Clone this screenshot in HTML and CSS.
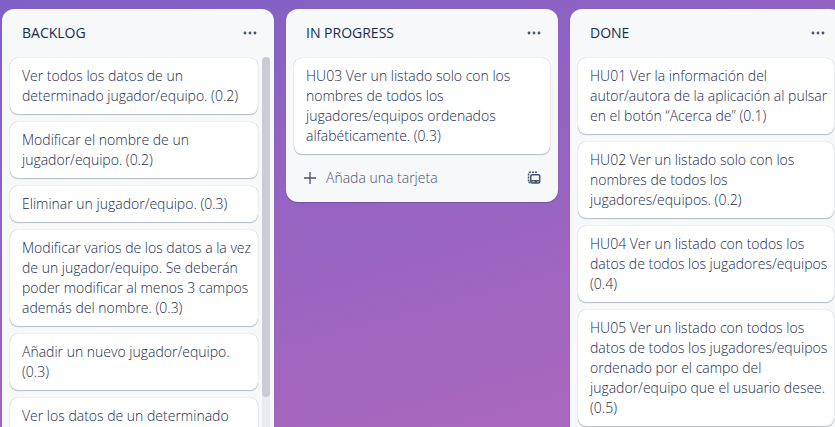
FILE: index.html
```html
<!DOCTYPE html>
<html lang="es">
<head>
<meta charset="utf-8">
<title>Tablero</title>
<link rel="stylesheet" href="styles.css">
</head>
<body>
<svg class="sprite" aria-hidden="true">
  <symbol id="dots" viewBox="0 0 16 16"><circle cx="3" cy="8" r="1.4"/><circle cx="8" cy="8" r="1.4"/><circle cx="13" cy="8" r="1.4"/></symbol>
</svg>
<main class="board">
  <section class="list list-tall">
    <header class="list-header">
      <h2>BACKLOG</h2>
      <button class="icon-button" type="button" aria-label="Acciones de lista"><svg><use href="#dots"/></svg></button>
    </header>
    <div class="list-body">
      <ul class="cards">
        <li><a class="card" href="#">Ver todos los datos de un determinado jugador/equipo. (0.2)</a></li>
        <li><a class="card" href="#">Modificar el nombre de un jugador/equipo. (0.2)</a></li>
        <li><a class="card" href="#">Eliminar un jugador/equipo. (0.3)</a></li>
        <li><a class="card" href="#">Modificar varios de los datos a la vez de un jugador/equipo. Se deberán poder modificar al menos 3 campos además del nombre. (0.3)</a></li>
        <li><a class="card" href="#">Añadir un nuevo jugador/equipo. (0.3)</a></li>
        <li><a class="card" href="#">Ver los datos de un determinado</a></li>
      </ul>
      <div class="scroll-track"><div class="scroll-thumb"></div></div>
    </div>
  </section>

  <section class="list">
    <header class="list-header">
      <h2>IN PROGRESS</h2>
      <button class="icon-button" type="button" aria-label="Acciones de lista"><svg><use href="#dots"/></svg></button>
    </header>
    <ul class="cards">
      <li><a class="card" href="#">HU03 Ver un listado solo con los nombres de todos los jugadores/equipos ordenados alfabéticamente. (0.3)</a></li>
    </ul>
    <footer class="list-footer">
      <button class="add-card" type="button"><svg viewBox="0 0 16 16"><path d="M8 2v12M2 8h12"/></svg>Añada una tarjeta</button>
      <button class="icon-button" type="button" aria-label="Crear desde plantilla"><svg class="template" viewBox="0 0 16 16"><path class="dashes" d="M2.6 11.5V3.2q0-.9.9-.9H12"/><path d="M2.6 12.6h1.4"/><rect x="4.8" y="4.8" width="8.9" height="8.2" rx="1.2"/><path d="M5 10.8h8.6"/><path class="notch" d="M8.5 12h2.5"/></svg></button>
    </footer>
  </section>

  <section class="list list-tall">
    <header class="list-header">
      <h2>DONE</h2>
      <button class="icon-button" type="button" aria-label="Acciones de lista"><svg><use href="#dots"/></svg></button>
    </header>
    <ul class="cards">
      <li><a class="card" href="#">HU01 Ver la información del autor/autora de la aplicación al pulsar en el botón “Acerca de” (0.1)</a></li>
      <li><a class="card" href="#">HU02 Ver un listado solo con los nombres de todos los jugadores/equipos. (0.2)</a></li>
      <li><a class="card" href="#">HU04 Ver un listado con todos los datos de todos los jugadores/equipos (0.4)</a></li>
      <li><a class="card" href="#">HU05 Ver un listado con todos los datos de todos los jugadores/equipos ordenado por el campo del jugador/equipo que el usuario desee. (0.5)</a></li>
    </ul>
  </section>
</main>
</body>
</html>
```
FILE: styles.css
```css
* { box-sizing: border-box; }

body {
  margin: 0;
  overflow: hidden;
  background: linear-gradient(165deg, #8060c6, #b068bd);
  color: #172b4d;
  font: 300 14px/20px "Open Sans", "Noto Sans", sans-serif;
}

.sprite { display: none; }

.board {
  display: flex;
  align-items: flex-start;
  gap: 12px;
  height: 100vh;
  padding: 9px 2px 0;
}

.list {
  display: flex;
  flex: 0 0 272px;
  flex-direction: column;
  border-radius: 12px;
  background: #f7f8fa;
  box-shadow: 0 1px 1px rgba(9, 30, 66, 0.25);
}

.list-tall {
  height: 100%;
  border-radius: 12px 12px 0 0;
  overflow: hidden;
}

.list-header {
  display: flex;
  flex: none;
  align-items: center;
  justify-content: space-between;
  height: 48px;
  padding: 0 8px 0 20px;
}

h2 {
  margin: 0;
  font-size: 14px;
  font-weight: 500;
}

button {
  border: 0;
  background: none;
  color: #44546f;
  font: inherit;
  cursor: pointer;
}

.icon-button {
  display: grid;
  place-items: center;
  width: 32px;
  height: 32px;
  padding: 0;
}

svg {
  width: 16px;
  height: 16px;
  fill: currentColor;
}

.list-body {
  display: flex;
  flex: 1;
  min-height: 0;
  padding-right: 4px;
}

.list-body .cards { padding-right: 4px; }

.cards {
  display: flex;
  flex: 1;
  flex-direction: column;
  gap: 8px;
  margin: 0;
  padding: 1px 8px 0;
  list-style: none;
}

.card {
  display: block;
  padding: 8px 4px 8px 12px;
  border-radius: 8px;
  background: #fff;
  box-shadow: 0 1px 1px rgba(9, 30, 66, 0.25), 0 0 1px rgba(9, 30, 66, 0.31);
  color: inherit;
  text-decoration: none;
}

.scroll-track {
  width: 8px;
  border-radius: 4px 4px 0 0;
  background: #e9ebee;
}

.scroll-thumb {
  height: 92%;
  border-radius: 4px;
  background: #c9cdd3;
}

.list-footer {
  display: flex;
  align-items: center;
  padding: 8px;
}

.add-card {
  display: flex;
  flex: 1;
  align-items: center;
  gap: 8px;
  height: 32px;
  padding: 0 8px;
}

.add-card svg, .template {
  fill: none;
  stroke: currentColor;
  stroke-width: 1.3;
}

.template { stroke-width: 1.5; }
.template .dashes { stroke-dasharray: 2 1; }
.template .notch { stroke-width: 2; }
```
